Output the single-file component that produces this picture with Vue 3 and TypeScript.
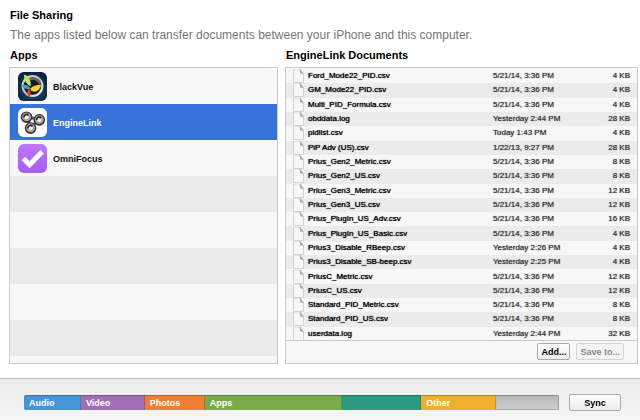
<script setup lang="ts">
import { ref } from 'vue'

interface FileEntry {
  name: string
  date: string
  size: string
}

const apps = ['BlackVue', 'EngineLink', 'OmniFocus']
const selected = ref('EngineLink')

const stamp = '5/21/14, 3:36 PM'
const files: FileEntry[] = [
  { name: 'Ford_Mode22_PID.csv', date: stamp, size: '4 KB' },
  { name: 'GM_Mode22_PID.csv', date: stamp, size: '4 KB' },
  { name: 'Multi_PID_Formula.csv', date: stamp, size: '4 KB' },
  { name: 'obddata.log', date: 'Yesterday 2:44 PM', size: '28 KB' },
  { name: 'pidlist.csv', date: 'Today 1:43 PM', size: '4 KB' },
  { name: 'PiP Adv (US).csv', date: '1/22/13, 9:27 PM', size: '28 KB' },
  { name: 'Prius_Gen2_Metric.csv', date: stamp, size: '8 KB' },
  { name: 'Prius_Gen2_US.csv', date: stamp, size: '8 KB' },
  { name: 'Prius_Gen3_Metric.csv', date: stamp, size: '12 KB' },
  { name: 'Prius_Gen3_US.csv', date: stamp, size: '12 KB' },
  { name: 'Prius_PlugIn_US_Adv.csv', date: stamp, size: '16 KB' },
  { name: 'Prius_PlugIn_US_Basic.csv', date: stamp, size: '4 KB' },
  { name: 'Prius3_Disable_RBeep.csv', date: 'Yesterday 2:26 PM', size: '4 KB' },
  { name: 'Prius3_Disable_SB-beep.csv', date: 'Yesterday 2:25 PM', size: '4 KB' },
  { name: 'PriusC_Metric.csv', date: stamp, size: '12 KB' },
  { name: 'PriusC_US.csv', date: stamp, size: '12 KB' },
  { name: 'Standard_PID_Metric.csv', date: stamp, size: '8 KB' },
  { name: 'Standard_PID_US.csv', date: stamp, size: '8 KB' },
  { name: 'userdata.log', date: 'Yesterday 2:44 PM', size: '32 KB' },
]

const usage = [
  { label: 'Audio', kind: 'audio', share: 57 },
  { label: 'Video', kind: 'video', share: 64 },
  { label: 'Photos', kind: 'photos', share: 60 },
  { label: 'Apps', kind: 'programs', share: 138 },
  { label: '', kind: 'files', share: 79 },
  { label: 'Other', kind: 'other', share: 75 },
  { label: '', kind: 'free', share: 63 },
]
</script>

<template>
  <div class="page">
    <main class="content">
      <h1>File Sharing</h1>
      <p class="intro">The apps listed below can transfer documents between your iPhone and this computer.</p>
      <div class="columns">
        <section>
          <h2>Apps</h2>
          <div class="panel app-list">
            <button
              v-for="app in apps"
              :key="app"
              type="button"
              class="app"
              :class="{ active: selected === app }"
              @click="selected = app"
            >
              <svg v-if="app === 'BlackVue'" class="app-icon" viewBox="0 0 30 30" aria-hidden="true">
                <defs>
                  <radialGradient id="navy" cx="50%" cy="60%" r="65%">
                    <stop offset="0" stop-color="#28536f" />
                    <stop offset="1" stop-color="#06213a" />
                  </radialGradient>
                  <linearGradient id="rim" x1="0" y1="0" x2="1" y2="1">
                    <stop offset="0" stop-color="#d4d4d0" />
                    <stop offset="0.5" stop-color="#b8b9b7" />
                    <stop offset="1" stop-color="#f8f8f4" />
                  </linearGradient>
                </defs>
                <rect width="30" height="30" rx="6" fill="url(#navy)" />
                <circle cx="15" cy="14.5" r="10.2" fill="#16191b" stroke="url(#rim)" stroke-width="2.2" />
                <path d="M10 9a8 8 0 0 1 13 3" fill="none" stroke="#66696a" stroke-width="2.4" />
                <path d="M6.500 2.500c5 2 7.500 7 6.500 12.500C8.500 12.500 5.500 8 6.500 2.500z" fill="#c3e264" />
                <path d="M3.500 13.500c4-1 7.500 .5 9.500 3.500-4 1.500-8 .5-9.500-3.500z" fill="#35a5cf" />
                <path d="M11.500 17c2 3 2 6 .5 9-3-2.500-3.300-6-.5-9z" fill="#ed3a31" />
                <path d="M13 17c2-2.500 5.500-3.500 11-4-1 5.500-4.500 8-8.500 7.200-1.800-.4-2.900-1.700-2.500-3.200z" fill="#f5cf32" />
              </svg>
              <svg v-else-if="app === 'EngineLink'" class="app-icon" viewBox="0 0 30 30" aria-hidden="true">
                <rect width="30" height="30" rx="6" fill="#fff" />
                <path d="M9 9 13 20 22 12z" fill="none" stroke="#5b5352" stroke-width="3" />
                <g fill="none" stroke="#37302f" stroke-width="4">
                  <circle cx="8.800" cy="9.500" r="4" />
                  <circle cx="22" cy="12.300" r="4" />
                  <circle cx="13" cy="20.800" r="4" />
                </g>
                <g fill="#eee" stroke="#aaa2a0" stroke-width="2.200">
                  <circle cx="8.800" cy="9.200" r="3.500" />
                  <circle cx="22" cy="12" r="3.500" />
                  <circle cx="13" cy="20.500" r="3.500" />
                </g>
                <g fill="none" stroke="#272120" stroke-width="1.600">
                  <path d="M6.300 9.800a2.500 2.500 0 0 1 4.500-2" />
                  <path d="M19.500 12.600a2.500 2.500 0 0 1 4.500-2" />
                  <path d="M10.500 21.100a2.500 2.500 0 0 1 4.500-2" />
                </g>
              </svg>
              <svg v-else class="app-icon" viewBox="0 0 30 30" aria-hidden="true">
                <defs>
                  <linearGradient id="violet" x1="0" y1="0" x2="0" y2="1">
                    <stop offset="0" stop-color="#c077fb" />
                    <stop offset="1" stop-color="#a45cef" />
                  </linearGradient>
                </defs>
                <rect width="30" height="30" rx="6" fill="url(#violet)" />
                <path d="M5.500 15 12 21.500 25 8" fill="none" stroke="#fff" stroke-width="5" />
              </svg>
              <span>{{ app }}</span>
            </button>
          </div>
        </section>

        <section>
          <h2>EngineLink Documents</h2>
          <div class="panel">
            <div class="file-list">
              <table aria-label="EngineLink Documents">
                <tbody>
                  <tr v-for="file in files" :key="file.name">
                    <td class="name">
                      <div class="file">
                        <svg class="file-icon" viewBox="0 0 11 14" aria-hidden="true">
                          <path d="M.5 0V13.500H10.500V5L6.500 0z" fill="#f7f7f7" stroke="#d2d2d2" />
                          <path d="M6 0C7.500 1.500 7 3 7 4.500 8.500 4.300 9.700 4.500 10.500 6L10.200 4 7.500 .5z" fill="#a9a9a9" />
                        </svg>
                        <span>{{ file.name }}</span>
                      </div>
                    </td>
                    <td class="date">{{ file.date }}</td>
                    <td class="size">{{ file.size }}</td>
                  </tr>
                </tbody>
              </table>
            </div>
            <div class="actions">
              <button type="button" class="push">Add...</button>
              <button type="button" class="push" disabled>Save to...</button>
            </div>
          </div>
        </section>
      </div>
    </main>

    <footer class="footer">
      <div class="capacity">
        <div
          v-for="part in usage"
          :key="part.kind"
          class="part"
          :class="part.kind"
          :style="{ flexGrow: part.share }"
        >{{ part.label }}</div>
      </div>
      <button type="button" class="push sync">Sync</button>
    </footer>
  </div>
</template>

<style>
body {
  margin: 0;
  background: #fff;
}
</style>

<style scoped>
.page {
  display: flex;
  flex-direction: column;
  min-height: 100vh;
  font-family: "Liberation Sans", Arial, sans-serif;
  color: #000;
}

.content {
  flex: 1;
  padding: 7px 2px 0 9px;
}

h1,
h2 {
  margin: 0;
  padding-left: 1px;
  font-size: 11px;
  line-height: 16px;
  font-weight: bold;
}

.intro {
  margin: 4px 0;
  padding-left: 1px;
  font-size: 12px;
  line-height: 16px;
  color: #777;
}

.columns {
  display: grid;
  grid-template-columns: 269fr 353fr;
  gap: 7px;
}

.columns section {
  display: flex;
  flex-direction: column;
}

h2 {
  padding-bottom: 4px;
}

.panel {
  flex: 1;
  border: 1px solid #cbcbcb;
  background: #f7f7f7;
}

.app-list {
  background: repeating-linear-gradient(#f7f7f7 0 36px, #ebebeb 36px 72px) 0 72px;
}

.app {
  display: flex;
  align-items: center;
  gap: 6px;
  width: 100%;
  height: 36px;
  padding: 0 8px;
  border: 0;
  background: #f7f7f7;
  font-family: inherit;
  font-size: 9px;
  line-height: 12px;
  font-weight: bold;
  color: #111;
}

.app span {
  padding-top: 2px;
}

.app.active {
  background: #3873d9;
  color: #fff;
}

.app-icon {
  width: 29px;
  height: 29px;
}

.file-list {
  box-sizing: border-box;
  height: 272px;
  padding-top: 1px;
  overflow: hidden;
}

table {
  width: 100%;
  height: 272px;
  border-collapse: collapse;
  table-layout: fixed;
  font-size: 8px;
  line-height: 14px;
}

tr:nth-child(even) {
  background: #ebebeb;
}

td {
  padding: 0;
  white-space: nowrap;
}

.name {
  color: #000;
  text-shadow: 0 0 1px #000;
}

.file {
  display: flex;
  align-items: center;
  gap: 4px;
  padding-left: 7px;
}

.file-icon {
  width: 11px;
  height: 14px;
}

.date {
  width: 87px;
  color: #333;
  text-shadow: 0 0 1px #555;
}

.size {
  width: 50px;
  padding-right: 7px;
  text-align: right;
  color: #333;
  text-shadow: 0 0 1px #555;
}

.actions {
  display: flex;
  justify-content: flex-end;
  gap: 6px;
  padding: 2px 13px 3px;
  border-top: 1px solid #cbcbcb;
}

.push {
  height: 17px;
  padding: 0 3px;
  border: 1px solid #aaa;
  border-radius: 2px;
  background: linear-gradient(#fff, #ececec);
  font-family: inherit;
  font-size: 9px;
  font-weight: bold;
  color: #000;
}

.push:disabled {
  border-color: #d5d5d5;
  background: #f4f4f4;
  color: #888;
}

.footer {
  display: flex;
  align-items: center;
  gap: 10px;
  height: 41px;
  padding: 0 19px 0 24px;
  border-top: 1px solid #c2c2c2;
  background: linear-gradient(#ebebeb, #f5f5f5);
}

.footer .push {
  margin-top: 6px;
}

.capacity {
  display: flex;
  flex: 1;
  height: 15px;
  margin-top: 6px;
  border-radius: 2px;
  overflow: hidden;
}

.part {
  flex: 0 1 0;
  text-indent: 5px;
  font-size: 9px;
  line-height: 16px;
  font-weight: bold;
  color: #fff;
  box-shadow: inset 0 1px 1px rgba(0, 0, 0, 0.25), inset -1px 0 0 rgba(0, 0, 0, 0.12);
}

.audio {
  background: #4595d8;
}

.video {
  background: #a06fb3;
}

.photos {
  background: #ee7f34;
}

.programs {
  background: #7aab4c;
}

.files {
  background: #2b9a80;
}

.other {
  background: #efb02c;
}

.free {
  background: linear-gradient(#b9b9b9, #cecece);
  box-shadow: inset 0 1px 1px #888, inset -1px 0 0 #999, inset 0 -1px 0 #aaa;
}

.push.sync {
  width: 52px;
}
</style>
